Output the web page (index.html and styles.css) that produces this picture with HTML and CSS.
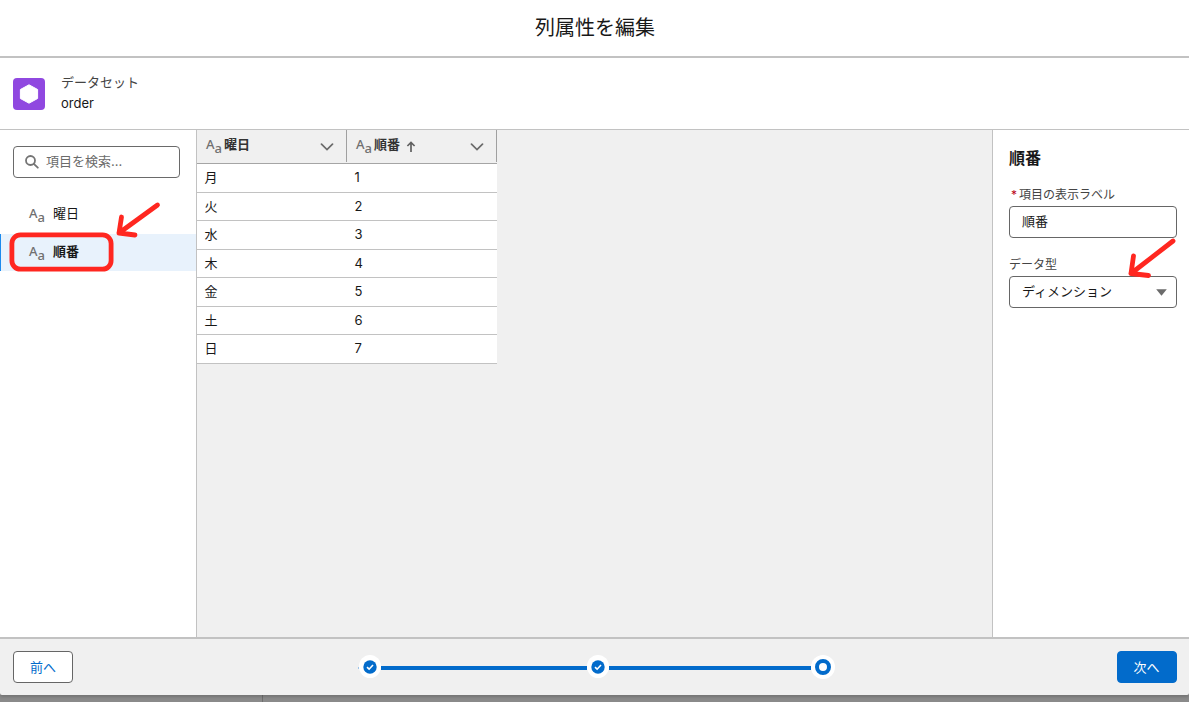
FILE: index.html
```html
<!DOCTYPE html>
<html lang="ja">
<head>
    <meta charset="UTF-8">
    <meta name="viewport" content="width=device-width, initial-scale=1.0">
    <title>列属性を編集</title>
    <link rel="stylesheet" href="styles.css">
</head>
<body>

    <div class="modal">
        <header class="modal-header">
            <h1>列属性を編集</h1>
        </header>

        <div class="dataset-bar">
            <svg class="dataset-icon" viewBox="0 0 32 32">
                <rect width="32" height="32" rx="4" fill="#9048e0"/>
                <path d="M16 6.8L24.6 11.5V20.5L16 25.2L7.4 20.5V11.5Z" fill="#fff" stroke="#fff" stroke-linejoin="round"/>
            </svg>
            <div class="dataset-text">
                <div class="dataset-label">データセット</div>
                <div class="dataset-name">order</div>
            </div>
        </div>

        <main class="content">
            <aside class="fields-panel">
                <div class="search-box">
                    <svg class="search-icon" viewBox="0 0 14 14">
                        <circle cx="5.5" cy="5.5" r="4.5"/>
                        <path d="M8.8 8.8L12.8 12.7"/>
                    </svg>
                    <span>項目を検索...</span>
                </div>
                <ul class="field-list">
                    <li class="field-item"><span class="type-icon">A<span>a</span></span>曜日</li>
                    <li class="field-item selected"><span class="type-icon">A<span>a</span></span>順番</li>
                </ul>
            </aside>

            <section class="preview">
                <div class="grid">
                    <div class="grid-head">
                        <div class="grid-th">
                            <span class="type-icon">A<span>a</span></span>曜日
                            <svg class="chevron" viewBox="0 0 14 8"><path d="M1.5 1.2L7 6.6L12.5 1.2"/></svg>
                        </div>
                        <div class="grid-th">
                            <span class="type-icon">A<span>a</span></span>順番
                            <svg class="sort-arrow" viewBox="0 0 10 12"><path d="M5 11V1.8M1.4 5L5 1.5L8.6 5"/></svg>
                            <svg class="chevron" viewBox="0 0 14 8"><path d="M1.5 1.2L7 6.6L12.5 1.2"/></svg>
                        </div>
                    </div>
                    <div class="grid-row"><span>月</span><span>1</span></div>
                    <div class="grid-row"><span>火</span><span>2</span></div>
                    <div class="grid-row"><span>水</span><span>3</span></div>
                    <div class="grid-row"><span>木</span><span>4</span></div>
                    <div class="grid-row"><span>金</span><span>5</span></div>
                    <div class="grid-row"><span>土</span><span>6</span></div>
                    <div class="grid-row"><span>日</span><span>7</span></div>
                </div>
            </section>

            <aside class="detail-panel">
                <h2>順番</h2>
                <div class="form-label"><span class="required">*</span>項目の表示ラベル</div>
                <div class="form-control">順番</div>
                <div class="form-label type-label">データ型</div>
                <div class="form-control">ディメンション
                    <svg class="select-arrow" viewBox="0 0 11 7"><path d="M0.2 0.2H10.8L5.5 6.8Z"/></svg>
                </div>
            </aside>
        </main>

        <footer class="modal-footer">
            <div class="btn btn-neutral">前へ</div>
            <div class="progress">
                <span class="stub"></span>
                <svg class="marker" viewBox="0 0 22 24">
                    <ellipse cx="11" cy="11.5" rx="11" ry="11.5" fill="#fff"/>
                    <circle cx="11" cy="12" r="6.7" fill="#026bcb"/>
                    <path d="M8 12.2L10.1 14.2L14 10" fill="none" stroke="#fff" stroke-width="1.6"/>
                </svg>
                <span class="line"></span>
                <svg class="marker" viewBox="0 0 22 24">
                    <ellipse cx="11" cy="11.5" rx="11" ry="11.5" fill="#fff"/>
                    <circle cx="11" cy="12" r="6.7" fill="#026bcb"/>
                    <path d="M8 12.2L10.1 14.2L14 10" fill="none" stroke="#fff" stroke-width="1.6"/>
                </svg>
                <span class="line last"></span>
                <svg class="marker current" viewBox="0 0 24 24">
                    <circle cx="12" cy="12" r="12" fill="#fff"/>
                    <circle cx="12" cy="12" r="6" fill="#fff" stroke="#026bcb" stroke-width="4"/>
                </svg>
            </div>
            <div class="btn btn-brand">次へ</div>
        </footer>
    </div>

    <!-- Red callouts over the page -->
    <svg class="callouts" viewBox="0 0 1189 702">
        <rect x="11.9" y="234.9" width="99.2" height="34.3" rx="8.5"/>
        <path d="M157.5 205L119 233M121.5 217L119 233L135 235"/>
        <path d="M1173 241L1131 273.5M1133.5 256L1131 273.5L1148.5 275.5"/>
    </svg>

</body>
</html>
```
FILE: styles.css
```css
* {
    box-sizing: border-box;
}
body {
    margin: 0;
    height: 702px;
    overflow: hidden;
    background-color: #8a8a8a;
    font-family: Inter, "Noto Sans CJK JP", sans-serif;
    font-size: 13px;
    color: #181818;
    /* backdrop with the page's own divider showing below the modal */
    background-image: linear-gradient(#6e6e6e, #6e6e6e);
    background-size: 1px 7px;
    background-position: 262px 695px;
    background-repeat: no-repeat;
}
.modal {
    display: flex;
    flex-direction: column;
    height: 695px;
    background-color: #f0f0f0;
    border-radius: 0 0 2px 2px;
    box-shadow: 0 2px 3px rgba(0, 0, 0, 0.16);
}
.modal-header {
    height: 58px;
    border-bottom: 2px solid #c2c2c2;
    background-color: #fff;
    text-align: center;
}
h1 {
    margin: 0;
    padding-left: 1px;
    font-size: 20px;
    font-weight: 400;
    line-height: 57px;
    height: 56px;
}
.dataset-bar {
    display: flex;
    height: 72px;
    padding: 20px 13px 0;
    gap: 16px;
    border-bottom: 1px solid #c2c2c2;
    background-color: #fff;
}
.dataset-icon {
    width: 32px;
    height: 32px;
}
.dataset-text {
    margin-top: -6px;
    line-height: 20px;
}
.dataset-label {
    color: #444;
}
.dataset-name {
    margin-top: 1px;
}
.content {
    display: flex;
    height: 507px;
}
.fields-panel {
    width: 197px;
    padding-top: 16px;
    border-right: 1px solid #c2c2c2;
    background-color: #fff;
}
.search-box {
    display: flex;
    gap: 7px;
    width: 167px;
    height: 32px;
    margin-left: 13px;
    padding-left: 11px;
    border: 1px solid #6a6a6a;
    border-radius: 4px;
    color: #6b6b6b;
    line-height: 28px;
}
.search-icon {
    width: 14px;
    height: 14px;
    margin-top: 8px;
    fill: none;
    stroke: #747474;
    stroke-width: 1.8;
    stroke-linecap: round;
}
.field-list {
    margin: 19px 0 0;
    padding: 0;
    list-style: none;
}
.field-item {
    display: flex;
    height: 37px;
    padding-left: 29px;
    line-height: 32px;
}
.field-item.selected {
    background-color: #e8f2fc;
    box-shadow: inset 1px 0 #1b8aee;
    font-weight: 700;
    line-height: 34px;
}
.type-icon {
    flex: none;
    width: 24px;
    font-family: "Noto Sans", sans-serif;
    font-weight: 500;
    color: #707070;
}
.type-icon span {
    position: relative;
    top: 4px;
}
.preview {
    flex: 1;
    background-color: #f0f0f0;
}
.grid {
    width: 300px;
}
.grid-head {
    display: flex;
    height: 34px;
    border-bottom: 1px solid #a5a5a5;
}
.grid-th {
    display: flex;
    width: 150px;
    height: 32px;
    padding: 0 12px 0 9px;
    border-right: 1px solid #a0a0a0;
    color: #333;
    font-weight: 700;
    line-height: 28px;
}
.grid-th .type-icon {
    width: 18px;
}
.chevron {
    width: 14px;
    height: 8px;
    margin: 13px 0 0 auto;
    fill: none;
    stroke: #6b6b6b;
    stroke-width: 1.7;
    stroke-linecap: round;
}
.sort-arrow {
    width: 10px;
    height: 12px;
    margin: 11px 0 0 6px;
    fill: none;
    stroke: #606060;
    stroke-width: 1.7;
}
.grid-row {
    display: flex;
    height: 28.5px;
    background-color: #fff;
    border-bottom: 1px solid #c2c2c2;
    line-height: 27px;
}
.grid-row span {
    width: 150px;
    padding-left: 7.5px;
}
.detail-panel {
    width: 197px;
    padding: 16px 12px 0 16px;
    border-left: 1px solid #c2c2c2;
    background-color: #fff;
}
h2 {
    margin: 0 0 12px;
    font-size: 16px;
    line-height: 24px;
}
.form-label {
    height: 24px;
    font-size: 12px;
    line-height: 26px;
    color: #444;
}
.type-label {
    margin-top: 14px;
}
.required {
    margin: 0 2px 0 2px;
    font-size: 12px;
    color: #ba0517;
}
.form-control {
    display: flex;
    justify-content: space-between;
    width: 168px;
    height: 32px;
    padding: 0 9px 0 12px;
    border: 1px solid #666;
    border-radius: 4px;
    background-color: #fff;
    line-height: 28px;
}
.select-arrow {
    width: 11px;
    height: 7px;
    margin-top: 12px;
    fill: #6b6b6b;
}
.modal-footer {
    display: flex;
    justify-content: space-between;
    height: 58px;
    padding: 12px 12px 0 13px;
    border-top: 2px solid #c2c2c2;
}
.btn {
    width: 60px;
    height: 32px;
    border: 1px solid #666;
    border-radius: 4px;
    text-align: center;
    line-height: 30px;
}
.btn-neutral {
    background-color: #fff;
    color: #026bcb;
}
.btn-brand {
    padding-right: 1px;
    background-color: #026bcb;
    border-color: #026bcb;
    color: #fff;
}
.progress {
    display: flex;
    align-items: center;
    width: 477px;
    height: 32px;
    margin-right: -2px;
}
.stub {
    width: 1px;
    height: 2px;
    margin-top: 2px;
    background-color: #9dc4e9;
}
.marker {
    flex: none;
    width: 22px;
    height: 24px;
}
.marker.current {
    width: 24px;
}
.line {
    flex: none;
    width: 206px;
    height: 4px;
    margin-top: 2px;
    background-color: #026bcb;
}
.line.last {
    width: 202px;
}
.callouts {
    position: absolute;
    top: 0;
    left: 0;
    width: 1189px;
    height: 702px;
    fill: none;
    stroke: #ff2720;
    stroke-width: 4.8;
    stroke-linecap: round;
    stroke-linejoin: round;
    pointer-events: none;
}
```
